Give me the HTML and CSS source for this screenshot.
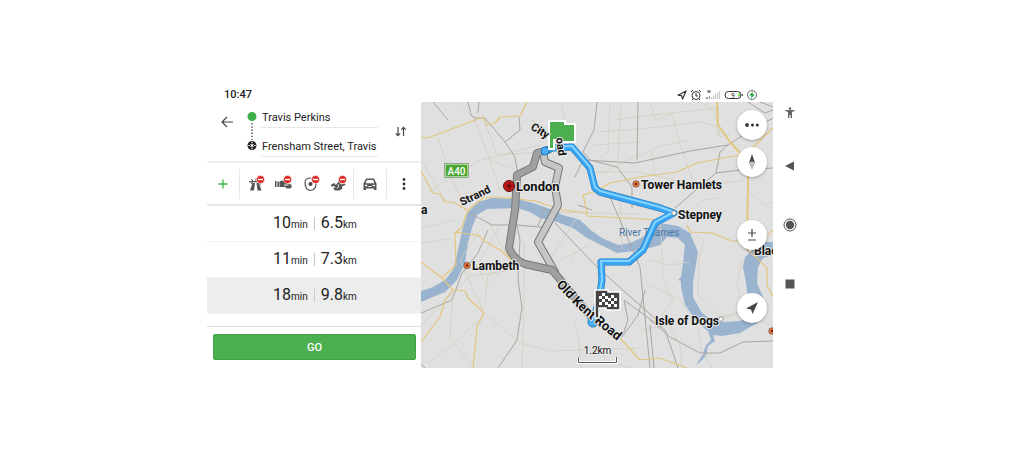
FILE: index.html
```html
<!DOCTYPE html>
<html lang="en">
<head>
    <meta charset="UTF-8">
    <meta name="viewport" content="width=device-width, initial-scale=1.0">
    <title>Route planner</title>
    <link rel="stylesheet" href="styles.css">
</head>
<body>

<div class="device">
    <div class="app">
        <header class="status-bar">
            <span class="clock">10:47</span>
            <div class="status-icons">
                <svg width="10" height="10" viewBox="0 0 10 10"><path d="M1 5.2 9 1 5.6 9 4.6 5.6z" fill="none" stroke="#333" stroke-width="1.2" stroke-linejoin="round"/></svg>
                <svg width="12" height="12" viewBox="0 0 12 12" fill="none" stroke="#333"><circle cx="6" cy="6.5" r="4"/><path d="M1 3 3 1M11 3 9 1M6 4v3h2M3 10l-1 1M9 10l1 1"/></svg>
                <svg width="16" height="12" viewBox="0 0 16 12"><path d="M3 1v3M5 1v3M3 2.5h2" stroke="#444" stroke-width=".8"/><path d="M1 8h2v2H1zM4 7h1v3H4z" fill="#999"/><path d="M6.5 8v2M8.5 6.5V10M10.5 5v5M12.5 3.5V10M14.5 2v8" stroke="#ccc" stroke-width="1.3"/></svg>
                <svg width="19" height="10" viewBox="0 0 19 10"><rect x="1" y="1.5" width="16" height="7" rx="3.5" fill="#fff" stroke="#333"/><path d="M18.3 4v2" stroke="#333"/><path d="M15 3.5v3" stroke="#5d3" stroke-width="1.5"/><text x="7" y="7.5" class="battery-text">9</text></svg>
                <svg width="12" height="12" viewBox="0 0 12 12"><circle cx="6" cy="6" r="4.5" fill="#fff" stroke="#444" stroke-width=".8"/><path d="M7 2.2 3.2 6.5h2.3L5 9.8l3.8-4.5H6.4z" fill="#19a23b"/></svg>
            </div>
        </header>

        <section class="panel">
            <form class="route-form">
                <button type="button" class="icon-btn back" aria-label="Back">
                    <svg width="12" height="12" viewBox="0 0 12 12" fill="none" stroke="#444" stroke-width="1.2"><path d="M12 6H1M6 1 1 6l5 5"/></svg>
                </button>
                <svg class="route-dots" width="12" height="40" viewBox="0 0 12 40">
                    <circle cx="6" cy="5.5" r="4.5" fill="#3daf46"/>
                    <path d="M6 12v17" stroke="#333" stroke-width="1.2" stroke-dasharray="1.5 1.7"/>
                    <circle cx="6" cy="34.5" r="4.5" fill="#222"/>
                    <path d="M4.600 33.100l2.800 2.800M7.400 33.100l-2.800 2.800M6 30.800v1.400M6 36.800v1.400M2.300 34.500h1.400M8.300 34.500h1.400" stroke="#fff" stroke-width="1.1"/>
                </svg>
                <div class="route-fields">
                    <input type="text" value="Travis Perkins" aria-label="Start">
                    <input type="text" value="Frensham Street, Travis" aria-label="Destination">
                </div>
                <button type="button" class="icon-btn swap" aria-label="Swap start and destination">
                    <svg width="12" height="11" viewBox="0 0 12 11" fill="none" stroke="#444" stroke-width="1.2"><path d="M3 1v8.500M.8 7.300 3 9.600l2.200-2.300M8.500 10V1.500M6.300 3.700l2.200-2.300 2.200 2.300"/></svg>
                </button>
            </form>

            <div class="toolbar">
                <button type="button" class="icon-btn add" aria-label="Add waypoint">
                    <svg width="10" height="10" viewBox="0 0 10 10"><path d="M5 .5v9M.5 5h9" stroke="#3daf46" stroke-width="1.3"/></svg>
                </button>
                <div class="avoid">
                    <button type="button" class="icon-btn" aria-label="Avoid motorways">
                        <svg width="18" height="18" viewBox="0 0 18 18"><path d="M4.500 8 2 15.500h4L7 8zM8.500 8l1 7.500h4L11 8zM1 6h12v1.300H1z" fill="#555"/><path d="M3.500 4 5 6.500 3 9M8 3.500V6M11 8l2 1.500" stroke="#555" fill="none"/><circle cx="12.5" cy="4.500" r="4" fill="#dc2018" stroke="#fff" stroke-width=".6"/><path d="M10 4.500h5" stroke="#fff" stroke-width="1.5"/></svg>
                    </button>
                    <button type="button" class="icon-btn" aria-label="Avoid toll roads">
                        <svg width="18" height="18" viewBox="0 0 18 18"><path d="M0 6h1.500v6H0zM2.500 6.500h2V12h-2zM5 6l4-.5 3 3 4 1c1.500 1.500.5 4-1.500 4h-3l-1-1.500L5 12z" fill="#555"/><path d="M9 10h4.500" stroke="#fff" stroke-width=".9"/><circle cx="12.5" cy="4.500" r="4" fill="#dc2018" stroke="#fff" stroke-width=".6"/><path d="M10 4.500h5" stroke="#fff" stroke-width="1.5"/></svg>
                    </button>
                    <button type="button" class="icon-btn" aria-label="Avoid zones">
                        <svg width="18" height="18" viewBox="0 0 18 18"><path d="M8 3C4.500 3 2 4 2 7.500c0 4 2 7.500 5.500 8C11 15 13 12 13 8.500" fill="none" stroke="#555" stroke-width="1.2"/><circle cx="7.500" cy="9" r="2" fill="#444"/><circle cx="12.5" cy="4.500" r="4" fill="#dc2018" stroke="#fff" stroke-width=".6"/><path d="M10 4.500h5" stroke="#fff" stroke-width="1.5"/></svg>
                    </button>
                    <button type="button" class="icon-btn" aria-label="Avoid unpaved roads">
                        <svg width="18" height="18" viewBox="0 0 18 18"><path d="M1 9.500 4.500 8l1 2L9 6l2 3.500 4-1 .5 1.500-3 1-.5 3-3 1.500H5L3 13l2.500-.8L4 11l-2.500.8z" fill="#555"/><path d="M7 8.500 9 11l-2 2.500" fill="none" stroke="#fff" stroke-width=".9"/><circle cx="12.5" cy="4.500" r="4" fill="#dc2018" stroke="#fff" stroke-width=".6"/><path d="M10 4.500h5" stroke="#fff" stroke-width="1.5"/></svg>
                    </button>
                </div>
                <button type="button" class="icon-btn car" aria-label="Vehicle">
                    <svg width="14" height="14" viewBox="0 0 14 14"><path d="M3 1.500h8l2.500 5V13H11v-1.500H3V13H.5V6.500z" fill="#555"/><path d="M3.800 3h6.400l1.300 3.200h-9z" fill="#fff"/><path d="M2 7.800h2.300v1.400H2zM9.700 7.800H12v1.400H9.700zM5.300 9h3.400v1H5.300z" fill="#fff"/></svg>
                </button>
                <button type="button" class="icon-btn more" aria-label="More">
                    <svg width="4" height="12" viewBox="0 0 4 12" fill="#333"><circle cx="2" cy="1.500" r="1.400"/><circle cx="2" cy="6" r="1.400"/><circle cx="2" cy="10.500" r="1.400"/></svg>
                </button>
            </div>

            <ul class="routes">
                <li><button type="button" class="route"><span>10<small>min</small></span><span class="distance">6.5<small>km</small></span></button></li>
                <li><button type="button" class="route"><span>11<small>min</small></span><span class="distance">7.3<small>km</small></span></button></li>
                <li><button type="button" class="route selected"><span>18<small>min</small></span><span class="distance">9.8<small>km</small></span></button></li>
            </ul>

            <div class="footer">
                <button type="button" class="go">GO</button>
            </div>
        </section>

        <section class="map">
            <svg class="map-canvas" viewBox="421 102 352 266" preserveAspectRatio="xMidYMid slice">
                <rect x="421" y="102" width="352" height="266" fill="#e0e0e0"/>

                <path class="river" d="M421 291 433 287 445 280 453 270 458 250 463 227 468 212 478 202 492 198 517 199 533 203 550 209 563 215 580 220 592 231 602 238 618 245 630 243 643 237 652 224 660 223 678 226 690 233 698 252 693 283 693 297 702 313 712 320 722 322 740 321 750 315 746 283 743 267 745 257 753 250 765 242 773 242V255L763 258 758 267 757 283 763 297 764 310 757 323 740 333 722 336 713 335 715 341 708 346 706 356 700 362 696 365 703 354 706 345 711 340 708 331 697 322 685 305 681 287V281L678 280 681 277 683 263 685 245 678 238 667 237 660 245 643 250 617 253 597 243 587 238 573 228 557 222 540 218 530 212 517 208 487 209 477 215 472 228 468 243 465 263 457 280 445 292 421 302z"/>

                <g class="lane">
                    <path d="M438 137 450 175 466 209M458 103 475 120 489 158 500 190M421 228 455 220M428 192 478 161 540 145M421 160 445 201M487 158 515 170M483 117 497 155 570 150M527 118 545 128 560 146"/>
                    <path d="M561 102 567 130 572 150M597 132 640 129 700 122 716 126 720 138M610 102 608 152 600 158M594 145 640 142M613 120 680 112 720 108M600 173 660 146 690 140M650 102 655 120 672 114 680 145 686 160 692 180M621 102 618 160M590 172 640 172 700 186 745 180M652 150 655 175M700 102 715 112 720 137 731 134"/>
                    <path d="M421 243 450 239M480 230 460 260 484 313M484 315 452 345 427 364M452 301 450 340 476 368M484 313 520 343 550 351 640 348M490 225 510 260M524 240 524 300 522 368M475 262 487 285 513 262M485 300 488 275 514 268M421 325 470 276 513 270M500 226 475 270"/>
                    <path d="M575 220 550 260M576 252 571 261M590 245 560 260M574 322 579 342 581 368M620 200 622 250M600 345 605 360 630 368M660 210 663 280 673 300 660 318M697 235 704 240 699 258 698 295 720 317 770 305M650 260 670 265 690 262M650 285 680 300 698 327 701 350 712 368M702 327 740 312 773 326M742 260 737 285 743 310M692 210 703 200 720 198M748 191 765 205 773 202M640 330 670 325 680 346 682 368M550 212 640 214"/>
                </g>

                <g class="rail">
                    <path d="M433 102 448 120M468 102 471 115 475 118 485 118 505 142 520 130 519 117M479 102 478 113M505 142 515 157 518 175"/>
                    <path d="M597 102 594 130 583 152 590 160 617 167 632 187 632 208M583 160 635 163 690 151 728 145 748 132 773 118M638 102 637 160M583 160 575 177M748 102 765 113 773 110M760 102 773 107M728 145 720 152 716 173 675 208M716 173 740 170 773 168"/>
                    <path d="M421 313 452 300 462 273 478 253 488 230M468 212 492 225 517 225 550 228M517 225 520 240 518 280 522 307 517 340 498 368M421 364 425 368"/>
                    <path d="M545 208 538 226M550 210 545 228M555 223 597 267 660 323M607 190 640 267 645 317 650 368M645 290 638 315 622 337M624 300 628 320 622 337M650 320 670 337 700 353 720 353 743 342 773 341M624 300 665 330 678 368M650 325 654 368M578 205 592 210"/>
                </g>

                <g class="road">
                    <path d="M421 137 428 138 483 117 487 125 495 123 500 117 520 116 527 102M421 171 433 193 440 194 445 202 453 202 467 210"/>
                    <path d="M468 210 483 198 497 197 535 201 563 210 587 213 585 203 583 195 597 191 610 183 640 177 677 172 697 163 740 155M587 213V216L623 218 660 220"/>
                    <path d="M468 210 462 227 455 233 456 265 442 278 453 290 465 291 468 298 484 313 477 327 473 368M453 290 445 300 440 317 421 342M421 262 442 278M453 232 478 235 483 240 500 250 513 261"/>
                    <path d="M687 225 690 232 712 233 732 241 763 240 773 230M773 128 753 147 740 153M620 338 640 360 660 358 673 363 687 368M747 250 757 258 767 268V285L773 297"/>
                    <path class="main" d="M717 102 718 125 730 142 740 153 748 177 747 250"/>
                </g>

                <text x="619" y="236" class="water-label">River Thames</text>

                <path class="alt edge" d="M543 152 545 162 559 168 555 187 558 205 538 242 555 272"/>
                <path class="alt light" d="M543 152 545 162 559 168 555 187 558 205 538 242 555 272"/>
                <path class="alt edge" d="M548 150 537 153 533 167 517 175 515 210 509 248Q514 260 525 264L552 270 558 277 571 293 592 318"/>
                <path class="alt" d="M548 150 537 153 533 167 517 175 515 210 509 248Q514 260 525 264L552 270 558 277 571 293 592 318"/>

                <g class="active">
                    <path class="outer" d="M545 151 552 148 572 147 590 168 595 188 600 192 660 208 674 213 655 223 643 250 629 262H601L602 280 599 300 593 322"/>
                    <path class="inner" d="M545 151 552 148 572 147 590 168 595 188 600 192 660 208 674 213 655 223 643 250 629 262H601L602 280 599 300 593 322"/>
                    <path class="shine" d="M552 147 572 146 590 167 595 187 600 191 660 207 674 212 655 222 643 249 629 261H601L602 280 598 300 593 318"/>
                    <circle cx="545" cy="151" r="4"/><circle cx="593" cy="322" r="5"/>
                </g>

                <rect x="445" y="164" width="23" height="13" fill="#4ba52f" stroke="#fff"/>
                <rect x="444.5" y="163.5" width="24" height="14" fill="none" stroke="#4e7d3e" stroke-width=".6"/>
                <text x="456.5" y="174.5" class="shield">A40</text>

                <circle cx="509" cy="186" r="5.5" fill="#d3181b" stroke="#501010"/>
                <path d="M505 186h8M509 182v8M506.5 183.5l5 5M511.5 183.5l-5 5" stroke="#4a0b0b" stroke-width=".8"/>
                <g fill="#222" stroke="#f26522" stroke-width="2">
                    <circle cx="636" cy="184" r="2"/><circle cx="467" cy="265.5" r="2"/><circle cx="772" cy="331" r="2"/>
                </g>
                <g fill="none" stroke="#444" stroke-width=".6">
                    <circle cx="636" cy="184" r="3.3"/><circle cx="467" cy="265.5" r="3.3"/><circle cx="772" cy="331" r="3.3"/>
                </g>
                <g fill="#fff" stroke="#777" stroke-width=".8">
                    <circle cx="674" cy="213" r="2.300"/><circle cx="721" cy="319" r="2.300"/><circle cx="750" cy="250" r="2.300"/>
                </g>

                <g class="place">
                    <text x="516" y="191" class="city">London</text>
                    <text x="641" y="189">Tower Hamlets</text>
                    <text x="678" y="219">Stepney</text>
                    <text x="472" y="270">Lambeth</text>
                    <text x="655" y="325">Isle of Dogs</text>
                    <text x="754" y="255">Blac</text>
                    <text x="421" y="214">a</text>
                </g>

                <!-- start flag -->
                <path d="M549 121h16v3h10v18h-14v-2h-7v9h-5z" fill="#4caf50" stroke="#fff" stroke-width="2"/>

                <g class="street">
                    <text transform="translate(530 129) rotate(31)">City</text>
                    <text transform="translate(556 138) rotate(82)">oad</text>
                    <text transform="translate(462 206) rotate(-26)">Strand</text>
                </g>
                <path id="oldKentRoad" d="M556 285 568 298Q580 311 594 322L630 351" fill="none"/>
                <text class="street big"><textPath href="#oldKentRoad">Old Kent Road</textPath></text>

                <!-- finish flag -->
                <path d="M595 290h13v2h12v18h-14v-2h-7v10h-4z" fill="#444" stroke="#fff" stroke-width="1.5"/>
                <path d="M602 293h3v3h-3zM605 296h3v3h-3zM611 295h3v3h-3zM599 296h3v3h-3zM608 298h3v3h-3zM614 298h3v3h-3zM602 299h3v3h-3zM605 302h3v3h-3zM611 301h3v3h-3zM599 302h3v3h-3zM608 304h3v3h-3zM614 304h3v3h-3z" fill="#fff"/>

                <path d="M578.5 357v5.500h38V357" fill="none" stroke="#fff" stroke-width="3"/>
                <path d="M578.5 357v5.500h38V357" fill="none" stroke="#555"/>
                <text x="597.5" y="354" class="scale">1.2km</text>
            </svg>

            <div class="map-controls">
                <button type="button" aria-label="Menu">
                    <svg width="14" height="6" viewBox="0 0 14 6" fill="#333"><circle cx="2" cy="3" r="1.900"/><circle cx="7.500" cy="3" r="1.500"/><circle cx="12.300" cy="3" r="1.500"/></svg>
                </button>
                <button type="button" aria-label="Compass">
                    <svg width="8" height="16" viewBox="0 0 8 16"><path d="M4 0 7 9 4 7.500 1 9z" fill="#444"/><path d="M1 9.500 4 8l3 1.500L4 16z" fill="#bbb"/></svg>
                </button>
                <button type="button" class="spaced" aria-label="Zoom">
                    <svg width="10" height="14" viewBox="0 0 10 14" stroke="#444" stroke-width="1.2"><path d="M5 1v8M1 5h8M1 12h8"/></svg>
                </button>
                <button type="button" class="spaced" aria-label="My location">
                    <svg width="12" height="12" viewBox="0 0 12 12"><path d="M0 6.500 12 0 6.500 12 5 7.500z" fill="#444"/></svg>
                </button>
            </div>
        </section>
    </div>

    <nav class="system-nav">
        <button type="button" class="icon-btn access" aria-label="Accessibility">
            <svg width="10" height="12" viewBox="0 0 10 12" fill="#666"><circle cx="5" cy="1.500" r="1.300"/><path d="M.5 3h9v1.200L7 4.800V11H5.600V8H4.400v3H3V4.800L.5 4.200z"/></svg>
        </button>
        <button type="button" class="icon-btn" aria-label="Back">
            <svg width="10" height="10" viewBox="0 0 10 10"><path d="M0 5 9 .5v9z" fill="#555"/></svg>
        </button>
        <button type="button" class="icon-btn" aria-label="Home">
            <svg width="14" height="14" viewBox="0 0 14 14"><circle cx="7" cy="7" r="6" fill="none" stroke="#555"/><circle cx="7" cy="7" r="4.200" fill="#555"/></svg>
        </button>
        <button type="button" class="icon-btn" aria-label="Recent apps">
            <svg width="10" height="10" viewBox="0 0 10 10"><path d="M.5 .5h9v9h-9z" fill="#555"/></svg>
        </button>
    </nav>
</div>

</body>
</html>
```
FILE: styles.css
```css
* {
    box-sizing: border-box;
}
body {
    margin: 0;
    padding: 87px 16px 0;
    background: #fff;
    color: #222;
    font-family: Roboto, "Liberation Sans", sans-serif;
    font-size: 11px;
}
button, input {
    font: inherit;
    color: inherit;
    border: none;
    background: none;
    padding: 0;
    margin: 0;
}
button {
    cursor: pointer;
}
svg {
    display: block;
}
.device {
    display: flex;
    max-width: 600px;
    margin: 0 auto;
}
.app {
    flex: 1;
    min-width: 0;
    display: grid;
    grid-template-columns: 214px minmax(0, 1fr);
}
.status-bar {
    grid-column: 1 / -1;
    display: flex;
    justify-content: space-between;
    align-items: center;
    height: 15px;
    padding: 0 15px 0 17px;
}
.clock {
    font-weight: 500;
}
.status-icons {
    display: flex;
    align-items: center;
    gap: 3px;
}
.battery-text {
    font-size: 7px;
    fill: #333;
}
.icon-btn {
    display: flex;
    align-items: center;
    justify-content: center;
}

/* left panel */
.panel {
    display: flex;
    flex-direction: column;
}
.route-form {
    display: flex;
    align-items: flex-start;
    height: 61px;
    padding: 9px 12px 0 14px;
    border-bottom: 2px solid #f0f0f0;
}
.back {
    padding-top: 5px;
}
.route-dots {
    margin: 0 3px 0 13px;
}
.route-fields {
    flex: 1;
    min-width: 0;
    display: flex;
    flex-direction: column;
    gap: 12px;
    padding-right: 15px;
}
.route-fields input {
    width: 100%;
    height: 17px;
    padding: 0 0 4px 1px;
    border-bottom: 1px solid #e8e8e8;
}
.swap {
    width: 16px;
    padding-top: 15px;
}
.toolbar {
    display: flex;
    align-items: center;
    height: 43px;
    border-bottom: 2px solid #e6e6e6;
}
.toolbar > * {
    height: 30px;
}
.add {
    width: 32px;
}
.avoid {
    flex: 1;
    display: flex;
    align-items: center;
    justify-content: space-around;
    padding-left: 3px;
    border-left: 1px solid #e8e8e8;
    border-right: 1px solid #e8e8e8;
}
.car {
    width: 33px;
    border-right: 1px solid #e8e8e8;
}
.more {
    width: 34px;
}
.routes {
    list-style: none;
    margin: 0;
    padding: 0 0 12px;
    border-bottom: 1px solid #ddd;
}
.route {
    display: flex;
    align-items: center;
    justify-content: center;
    width: 100%;
    height: 36px;
    padding-left: 2px;
    border-bottom: 1px solid #f3f3f3;
    font-size: 16px;
    line-height: 20px;
}
.route small {
    font-size: 10px;
}
.route.selected {
    background: #ededed;
}
.distance {
    display: flex;
    align-items: baseline;
}
.distance::before {
    content: "";
    align-self: center;
    width: 1px;
    height: 13px;
    margin: 0 6px;
    background: #c8c8c8;
}
.footer {
    padding: 7px 5px 7px 6px;
}
.go {
    width: 100%;
    height: 26px;
    border: 1px solid #3fa244;
    border-radius: 2px;
    background: #4caf50;
    color: #fff;
    font-weight: 500;
}

/* map */
.map {
    position: relative;
    min-height: 266px;
    overflow: hidden;
}
.map-canvas {
    width: 100%;
    height: 100%;
}
.river {
    fill: #9ab4d0;
}
.lane, .rail, .road {
    fill: none;
    stroke-linejoin: round;
}
.lane {
    stroke: #d3cfbf;
    stroke-width: 0.8;
}
.rail {
    stroke: #aaa69f;
    stroke-width: 1;
}
.road {
    stroke: #e3c67d;
    stroke-width: 1.2;
}
.road .main {
    stroke-width: 2;
}
.alt {
    fill: none;
    stroke: #a0a0a0;
    stroke-width: 6;
    stroke-linejoin: round;
    stroke-linecap: round;
}
.alt.edge {
    stroke: #777;
    stroke-width: 8;
}
.alt.light {
    stroke: #c6c6c6;
}
.active path {
    fill: none;
    stroke-linejoin: round;
    stroke-linecap: round;
}
.active .outer {
    stroke: #1b6fb5;
    stroke-width: 7;
}
.active .inner {
    stroke: #36a5f5;
    stroke-width: 6;
}
.active .shine {
    stroke: #85d3ff;
    stroke-width: 2;
}
.active circle {
    fill: #4bb0f5;
    stroke: #1c75bb;
}
.place, .street, .shield, .scale {
    paint-order: stroke;
    stroke: #e8e8e8;
    stroke-width: 2px;
    stroke-linejoin: round;
    fill: #111;
    font-weight: 700;
}
.place {
    font-size: 12px;
}
.place .city {
    font-size: 13px;
}
.street {
    font-size: 11px;
}
.street.big {
    font-size: 13px;
}
.shield {
    font-size: 10px;
    font-weight: 500;
    fill: #fff;
    stroke: none;
    text-anchor: middle;
}
.scale {
    font-size: 10px;
    font-weight: 400;
    text-anchor: middle;
}
.water-label {
    font-size: 10px;
    fill: #4b75a6;
}
.map-controls {
    position: absolute;
    top: 8px;
    right: 6px;
    display: flex;
    flex-direction: column;
    gap: 7px;
}
.map-controls button {
    display: flex;
    align-items: center;
    justify-content: center;
    width: 30px;
    height: 30px;
    border-radius: 50%;
    background: #fff;
    box-shadow: 0 1px 3px rgba(0, 0, 0, 0.3);
}
.map-controls .spaced {
    margin-top: 36px;
}

/* system buttons */
.system-nav {
    width: 34px;
    padding-top: 2px;
}
.system-nav .icon-btn {
    width: 100%;
    height: 59px;
}
.system-nav .access {
    height: 47px;
}
```
